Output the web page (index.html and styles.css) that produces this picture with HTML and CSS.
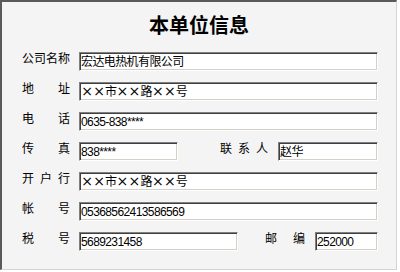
FILE: index.html
```html
<!DOCTYPE html>
<html lang="zh-CN">
<head>
    <meta charset="UTF-8">
    <meta name="viewport" content="width=device-width, initial-scale=1.0">
    <title>本单位信息</title>
    <link rel="stylesheet" href="styles.css">
</head>
<body>
    <div class="panel">
        <h1>本单位信息</h1>
        <div class="info-form">
            <div class="row">
                <span class="lbl">公司名称</span>
                <div class="fld fld-full">宏达电热机有限公司</div>
            </div>
            <div class="row">
                <span class="lbl">地址</span>
                <div class="fld fld-full"><span class="x">×</span><span class="x">×</span>市<span class="x">×</span><span class="x">×</span>路<span class="x">×</span><span class="x">×</span>号</div>
            </div>
            <div class="row">
                <span class="lbl">电话</span>
                <div class="fld fld-full">0635-838****</div>
            </div>
            <div class="row">
                <span class="lbl">传真</span>
                <div class="fld fld-fax">838****</div>
                <span class="lbl lbl-contact">联系人</span>
                <div class="fld fld-contact">赵华</div>
            </div>
            <div class="row">
                <span class="lbl">开户行</span>
                <div class="fld fld-full"><span class="x">×</span><span class="x">×</span>市<span class="x">×</span><span class="x">×</span>路<span class="x">×</span><span class="x">×</span>号</div>
            </div>
            <div class="row">
                <span class="lbl">帐号</span>
                <div class="fld fld-full">05368562413586569</div>
            </div>
            <div class="row">
                <span class="lbl">税号</span>
                <div class="fld fld-tax">5689231458</div>
                <span class="lbl lbl-zip">邮编</span>
                <div class="fld fld-zip">252000</div>
            </div>
        </div>
    </div>
</body>
</html>
```

FILE: styles.css
```css
body {
    margin: 0;
    background: #fff;
    font-family: "Noto Sans CJK SC", sans-serif;
}
.panel {
    width: 397px;
    height: 270px;
    box-sizing: border-box;
    background: #f4f4f4;
    border-top: 2px solid #5a5a5a;
    border-left: 2px solid #5a5a5a;
    border-right: 1px solid #d4d4d4;
    border-bottom: 1px solid #d4d4d4;
    padding-top: 9px;
}
h1 {
    margin: 0;
    text-align: center;
    font-size: 20px;
    line-height: 28px;
    font-weight: bold;
    color: #000;
}
.info-form {
    margin-top: 13px;
    padding-left: 20px;
    display: flex;
    flex-direction: column;
    gap: 11px;
}
.row {
    display: flex;
    align-items: flex-start;
    height: 19px;
}
.lbl {
    width: 48px;
    font-size: 12px;
    line-height: 12px;
    color: #000;
    text-align: justify;
    text-align-last: justify;
    margin-right: 9px;
}
.lbl-contact {
    margin-left: 42px;
    margin-right: 10px;
}
.lbl-zip {
    width: 40px;
    margin-left: 27px;
    margin-right: 10px;
}
.fld {
    height: 19px;
    box-sizing: border-box;
    padding: 0 1px;
    background: #fff;
    border: 1px solid;
    border-color: #808080 #fff #fff #808080;
    box-shadow: inset 1px 1px #404040, inset -1px -1px #d4d0c8;
    font-family: "Liberation Sans", "Noto Sans CJK SC", sans-serif;
    font-size: 12px;
    line-height: 18px;
    letter-spacing: -0.6px;
    color: #000;
    white-space: nowrap;
    overflow: hidden;
}
.x {
    display: inline-block;
    width: 12px;
    text-align: center;
    letter-spacing: 0;
    font-family: "DejaVu Sans", sans-serif;
    font-size: 14px;
    line-height: 12px;
}
.fld-full {
    width: 299px;
}
.fld-fax {
    width: 99px;
}
.fld-contact {
    width: 100px;
}
.fld-tax {
    width: 159px;
}
.fld-zip {
    width: 63px;
}
```
